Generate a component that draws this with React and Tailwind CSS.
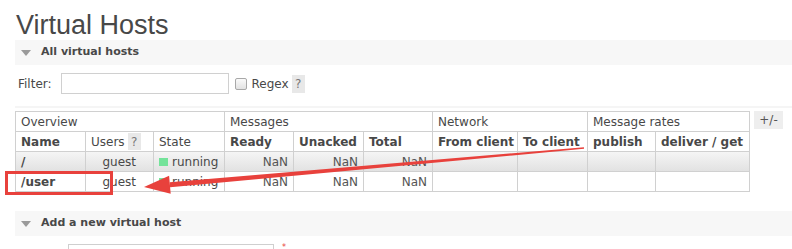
import React from "react";

const cols = "grid-cols-[70px_68px_71px_69px_70px_69px_85px_70px_68px_94px]";

const Cell = ({ children, className = "" }) => (
  <div className={`h-[20px] border-r border-b border-[#d0d0d0] flex items-center px-[5px] whitespace-nowrap ${className}`}>
    {children}
  </div>
);

const SectionBar = ({ title }) => (
  <div className="ml-[15px] h-[25px] bg-[#f7f7f7] flex items-center">
    <span className="ml-[6px] w-0 h-0 border-l-[5px] border-r-[5px] border-t-[6px] border-l-transparent border-r-transparent border-t-[#9a9a9a]" />
    <span className="ml-[10px] font-bold text-[11px]">{title}</span>
  </div>
);

const HostRow = ({ name, gray }) => {
  const bg = gray ? "bg-gradient-to-b from-[#f5f5f5] to-[#e2e2e2]" : "bg-white";
  return (
    <>
      <Cell className={`${bg} font-bold`}>{name}</Cell>
      <Cell className={`${bg} justify-end pr-[17px]`}>guest</Cell>
      <Cell className={bg}>
        <span className="w-[9px] h-[8px] bg-[#74e39a] mr-[4px]" />
        running
      </Cell>
      <Cell className={`${bg} justify-end text-[#555]`}>NaN</Cell>
      <Cell className={`${bg} justify-end text-[#555]`}>NaN</Cell>
      <Cell className={`${bg} justify-end text-[#555]`}>NaN</Cell>
      <Cell className={bg} />
      <Cell className={bg} />
      <Cell className={bg} />
      <Cell className={bg} />
    </>
  );
};

export default function App() {
  return (
    <div className="relative w-[792px] h-[249px] overflow-hidden bg-white text-[#484848] text-[12px] font-['DejaVu_Sans',sans-serif]">
      <h1 className="h-[40px] pt-[11px] pl-[16px] leading-[29px] text-[27px] font-['Liberation_Sans',sans-serif]">
        Virtual Hosts
      </h1>

      <SectionBar title="All virtual hosts" />

      <div className="mt-[8px] flex items-center h-[21px] pl-[18px]">
        <span>Filter:</span>
        <input className="ml-[9px] w-[168px] h-[21px] border border-[#d0d0d0] bg-white outline-none" />
        <span className="ml-[6px] w-[12px] h-[12px] border border-[#a8a8a8] rounded-[2px] bg-gradient-to-b from-[#fafafa] to-[#e2e2e2]" />
        <span className="ml-[5px]">Regex</span>
        <span className="ml-[3px] w-[13px] h-[18px] bg-[#e8e8e8] text-[#777] flex items-center justify-center">?</span>
      </div>

      <div className="mt-[12px] ml-[15px] h-[2px] bg-[#f5f5f5]" />

      <div className="mt-[3px] ml-[15px] flex items-start">
        <div className={`grid ${cols} border-l border-t border-[#d0d0d0]`}>
          <Cell className="col-span-3">Overview</Cell>
          <Cell className="col-span-3">Messages</Cell>
          <Cell className="col-span-2">Network</Cell>
          <Cell className="col-span-2">Message rates</Cell>

          <Cell className="font-bold">Name</Cell>
          <Cell className="items-end">
            <span className="self-center">Users</span>
            <span className="ml-[3px] mb-[1px] w-[13px] h-[17px] bg-[#e8e8e8] text-[#777] flex items-center justify-center">?</span>
          </Cell>
          <Cell>State</Cell>
          <Cell className="font-bold">Ready</Cell>
          <Cell className="font-bold">Unacked</Cell>
          <Cell className="font-bold">Total</Cell>
          <Cell className="font-bold">From client</Cell>
          <Cell className="font-bold">To client</Cell>
          <Cell className="font-bold">publish</Cell>
          <Cell className="font-bold">deliver / get</Cell>

          <HostRow name="/" gray />
          <HostRow name="/user" />
        </div>
        <button className="ml-[4px] w-[29px] h-[18px] bg-[#eeeeee] text-[#555] text-[12px] flex items-center justify-center">
          +/-
        </button>
      </div>

      <div className="mt-[19px]">
        <SectionBar title="Add a new virtual host" />
      </div>

      <div className="mt-[8px] flex items-start">
        <input className="ml-[68px] w-[206px] h-[22px] border border-[#cfcfcf] bg-white outline-none" />
        <span className="ml-[8px] mt-[1px] text-[#e8413c] text-[8px] leading-[6px]">*</span>
      </div>

      {/* annotation */}
      <div className="absolute left-[5px] top-[171px] w-[108px] h-[24px] border-[3px] border-[#e8413c]" />
      <svg className="absolute inset-0 pointer-events-none" width="792" height="249">
        <polygon
          points="584.07,148.75 583.93,147.25 169.7,182.2 170.1,187.2"
          fill="#e8413c"
        />
        <polygon points="144,187 169.1,175.7 170.7,193.7" fill="#e8413c" />
      </svg>
    </div>
  );
}
